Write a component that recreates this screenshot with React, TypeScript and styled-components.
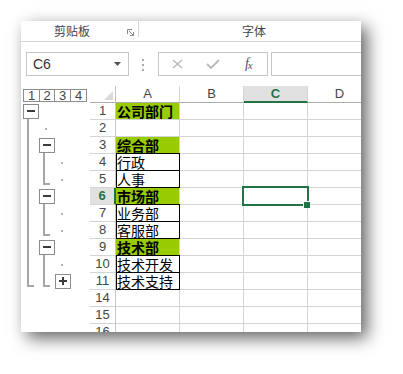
import React from 'react';
import styled, { createGlobalStyle, css } from 'styled-components';

const GlobalStyle = createGlobalStyle`
  html, body { margin: 0; padding: 0; background: #ffffff; }
  body { font-family: "Liberation Sans", "Noto Sans CJK SC", sans-serif; }
`;

const Stage = styled.div`
  width: 403px;
  height: 374px;
  padding: 21px 0 0 21px;
  box-sizing: border-box;
  background: #fff;
`;

const Window = styled.div`
  width: 340px;
  height: 311px;
  background: #fff;
  overflow: hidden;
  display: flex;
  flex-direction: column;
  box-shadow: 6px 6px 16px rgba(0, 0, 0, 0.62);
`;

/* ---------- ribbon group labels ---------- */
const GroupRow = styled.div`
  display: flex;
  height: 20px;
  flex: none;
  border-bottom: 1px solid #d5d5d5;
`;

const Group = styled.div<{ $width: number }>`
  width: ${p => p.$width}px;
  flex: none;
  display: flex;
  align-items: center;
`;

const GroupLabel = styled.span`
  flex: 1;
  text-align: center;
  font: 12px/20px "Noto Sans CJK SC", sans-serif;
  color: #444;
`;

const Launcher = styled.svg`
  flex: none;
  align-self: flex-end;
  margin: 0 4px 5px 4px;
`;

const GroupDivider = styled.div`
  width: 1px;
  height: 16px;
  background: #d5d5d5;
  flex: none;
`;

/* ---------- formula bar ---------- */
const FormulaBar = styled.div`
  display: flex;
  align-items: flex-start;
  height: 44px;
  flex: none;
  padding: 10px 0 0 5px;
  box-sizing: border-box;
`;

const NameBox = styled.div`
  width: 103px;
  height: 24px;
  flex: none;
  box-sizing: border-box;
  border: 1px solid #c6c6c6;
  display: flex;
  align-items: center;
  padding: 0 7px 0 6px;
  font: 14px "Liberation Sans", sans-serif;
  color: #333;
`;

const NameText = styled.span`
  flex: 1;
`;

const Kebab = styled.div`
  flex: none;
  margin: 7px 0 0 13px;
  display: flex;
  flex-direction: column;
  gap: 3px;
`;

const KebabDot = styled.span`
  width: 2px;
  height: 2px;
  background: #a8a8a8;
`;

const FnBox = styled.div`
  flex: none;
  margin-left: 14px;
  width: 110px;
  height: 24px;
  box-sizing: border-box;
  border: 1px solid #c6c6c6;
  display: flex;
  align-items: center;
  padding: 0 1px;
`;

const FnSlot = styled.div`
  width: 36px;
  display: flex;
  justify-content: center;
  align-items: center;
`;

const Fx = styled.span`
  font: italic 14px "Liberation Serif", serif;
  color: #555;
  letter-spacing: -1px;
  sub {
    font-size: 11px;
    vertical-align: -1px;
  }
`;

const FormulaInput = styled.div`
  flex: none;
  margin-left: 3px;
  width: 120px;
  height: 24px;
  box-sizing: border-box;
  border: 1px solid #c6c6c6;
`;

/* ---------- sheet ---------- */
const SheetArea = styled.div`
  display: flex;
  flex: none;
`;

const OutlinePane = styled.div`
  width: 69px;
  flex: none;
  display: flex;
  flex-direction: column;
`;

const LevelBar = styled.div`
  height: 17px;
  flex: none;
  display: flex;
  padding: 3px 0 0 2px;
  box-sizing: border-box;
`;

const LevelButton = styled.div<{ $w: number; $last?: boolean }>`
  width: ${p => p.$w}px;
  height: 13px;
  box-sizing: border-box;
  border: 1px solid #8c8c8c;
  border-right: ${p => (p.$last ? '1px solid #8c8c8c' : 'none')};
  display: flex;
  align-items: center;
  justify-content: center;
  font: 13px/11px "Liberation Sans", sans-serif;
  color: #444;
`;

const OutlineDrawing = styled.svg`
  display: block;
  flex: none;
`;

const Sheet = styled.div`
  flex: none;
  display: grid;
  grid-template-columns: 26px repeat(4, 64px);
  grid-auto-rows: 17px;
`;

const Corner = styled.div`
  box-sizing: border-box;
  border-right: 1px solid #c6c6c6;
  border-bottom: 1px solid #ababab;
  display: flex;
  align-items: flex-end;
  justify-content: flex-end;
  padding: 0 2px 2px 0;
`;

const ColHead = styled.div<{ $active?: boolean }>`
  box-sizing: border-box;
  border-right: 1px solid #d4d4d4;
  border-bottom: ${p => (p.$active ? '2px solid #217346' : '1px solid #ababab')};
  background: ${p => (p.$active ? '#e1e1e1' : '#fff')};
  color: ${p => (p.$active ? '#217346' : '#444')};
  font: 13px/16px "Liberation Sans", sans-serif;
  font-weight: ${p => (p.$active ? 'bold' : 'normal')};
  text-align: center;
`;

const RowHead = styled.div<{ $active?: boolean }>`
  box-sizing: border-box;
  border-right: ${p => (p.$active ? '2px solid #217346' : '1px solid #c6c6c6')};
  border-bottom: 1px solid #d4d4d4;
  background: ${p => (p.$active ? '#e1e1e1' : '#fff')};
  color: ${p => (p.$active ? '#217346' : '#444')};
  font: 13px/16px "Liberation Sans", sans-serif;
  font-weight: ${p => (p.$active ? 'bold' : 'normal')};
  text-align: center;
`;

type Kind = 'head' | 'box' | 'plain';

const Cell = styled.div<{ $kind?: Kind }>`
  position: relative;
  box-sizing: border-box;
  border-right: 1px solid #d4d4d4;
  border-bottom: 1px solid #d4d4d4;
  padding-left: 1px;
  white-space: nowrap;
  font: 14px/16px "Noto Sans CJK SC", sans-serif;
  color: #000;
  ${p =>
    p.$kind === 'head' &&
    css`
      background: #99cc00;
      font-weight: bold;
    `}
  ${p =>
    p.$kind === 'box' &&
    css`
      border-right-color: #000;
      border-bottom-color: #000;
      box-shadow: inset 1px 0 0 #000, 0 -1px 0 #000;
    `}
`;

const Selection = styled.div`
  position: absolute;
  left: -2px;
  top: -2px;
  width: 67px;
  height: 20px;
  box-sizing: border-box;
  border: 2px solid #217346;
  z-index: 1;
`;

const FillHandle = styled.div`
  position: absolute;
  left: 60px;
  top: 14px;
  width: 6px;
  height: 6px;
  background: #217346;
  box-shadow: -1px -1px 0 #fff;
`;

/* ---------- data ---------- */
const rows: { n: number; a: string; kind: Kind }[] = [
  { n: 1, a: '公司部门', kind: 'head' },
  { n: 2, a: '', kind: 'plain' },
  { n: 3, a: '综合部', kind: 'head' },
  { n: 4, a: '行政', kind: 'box' },
  { n: 5, a: '人事', kind: 'box' },
  { n: 6, a: '市场部', kind: 'head' },
  { n: 7, a: '业务部', kind: 'box' },
  { n: 8, a: '客服部', kind: 'box' },
  { n: 9, a: '技术部', kind: 'head' },
  { n: 10, a: '技术开发', kind: 'box' },
  { n: 11, a: '技术支持', kind: 'box' },
  { n: 14, a: '', kind: 'plain' },
  { n: 15, a: '', kind: 'plain' },
  { n: 16, a: '', kind: 'plain' },
];

const LINE = '#a6a6a6';
const BOX = '#8c8c8c';
const SIGN = '#3c3c3c';
const DOT = '#b4b4b4';
const T = (n: number) => (n - 1) * 17;

function OutlineButton({ x, top, plus }: { x: number; top: number; plus?: boolean }) {
  return (
    <g>
      <rect x={x + 0.5} y={top + 1.5} width={15} height={14} fill="#fff" stroke={BOX} />
      <rect x={x + 4} y={top + 7} width={8} height={2} fill={SIGN} />
      {plus && <rect x={x + 7} y={top + 4} width={2} height={8} fill={SIGN} />}
    </g>
  );
}

function Outline() {
  const groups: [number, number][] = [
    [3, 5],
    [6, 8],
    [9, 11],
  ];
  return (
    <OutlineDrawing width={69} height={238} viewBox="0 0 69 238">
      <rect x={6} y={16} width={2} height={T(11) + 14 - 16} fill={LINE} />
      <rect x={6} y={T(11) + 12} width={7} height={2} fill={LINE} />
      <OutlineButton x={2} top={T(1)} />
      <rect x={24} y={T(2) + 8} width={2} height={2} fill={DOT} />
      {groups.map(([g, last]) => (
        <g key={g}>
          <rect x={22} y={T(g) + 16} width={2} height={T(last) + 14 - (T(g) + 16)} fill={LINE} />
          <rect x={22} y={T(last) + 12} width={7} height={2} fill={LINE} />
          <OutlineButton x={18} top={T(g)} />
        </g>
      ))}
      {[4, 5, 7, 8, 10].map(n => (
        <rect key={n} x={40} y={T(n) + 8} width={2} height={2} fill={DOT} />
      ))}
      <OutlineButton x={34} top={T(11)} plus />
    </OutlineDrawing>
  );
}

export default function App() {
  return (
    <>
      <GlobalStyle />
      <Stage>
        <Window>
          <GroupRow>
            <Group $width={117}>
              <GroupLabel>剪贴板</GroupLabel>
              <Launcher width={7} height={7} viewBox="0 0 7 7">
                <path d="M0.5 5 V0.5 H5" stroke="#888" fill="none" />
                <path d="M2 2 L6 6" stroke="#888" />
                <path d="M3 6.5 H6.5 V3" stroke="#888" fill="none" />
              </Launcher>
            </Group>
            <GroupDivider />
            <Group $width={230}>
              <GroupLabel>字体</GroupLabel>
            </Group>
          </GroupRow>

          <FormulaBar>
            <NameBox>
              <NameText>C6</NameText>
              <svg width={7} height={4} viewBox="0 0 7 4">
                <polygon points="0,0 7,0 3.5,4" fill="#555" />
              </svg>
            </NameBox>
            <Kebab>
              <KebabDot />
              <KebabDot />
              <KebabDot />
            </Kebab>
            <FnBox>
              <FnSlot>
                <svg width={11} height={10} viewBox="0 0 11 10">
                  <path d="M1 1 L10 9 M10 1 L1 9" stroke="#b8b8b8" strokeWidth={1.4} fill="none" />
                </svg>
              </FnSlot>
              <FnSlot>
                <svg width={14} height={10} viewBox="0 0 14 10">
                  <path d="M1 5 L5 9 L13 1" stroke="#b8b8b8" strokeWidth={1.8} fill="none" />
                </svg>
              </FnSlot>
              <FnSlot>
                <Fx>
                  f<sub>x</sub>
                </Fx>
              </FnSlot>
            </FnBox>
            <FormulaInput />
          </FormulaBar>

          <SheetArea>
            <OutlinePane>
              <LevelBar>
                <LevelButton $w={16}>1</LevelButton>
                <LevelButton $w={15}>2</LevelButton>
                <LevelButton $w={16}>3</LevelButton>
                <LevelButton $w={17} $last>
                  4
                </LevelButton>
              </LevelBar>
              <Outline />
            </OutlinePane>

            <Sheet>
              <Corner>
                <svg width={9} height={9} viewBox="0 0 9 9">
                  <polygon points="9,0 9,9 0,9" fill="#dadada" />
                </svg>
              </Corner>
              <ColHead>A</ColHead>
              <ColHead>B</ColHead>
              <ColHead $active>C</ColHead>
              <ColHead>D</ColHead>
              {rows.map(r => (
                <React.Fragment key={r.n}>
                  <RowHead $active={r.n === 6}>{r.n}</RowHead>
                  <Cell $kind={r.kind}>{r.a}</Cell>
                  <Cell />
                  <Cell>
                    {r.n === 6 && (
                      <Selection>
                        <FillHandle />
                      </Selection>
                    )}
                  </Cell>
                  <Cell />
                </React.Fragment>
              ))}
            </Sheet>
          </SheetArea>
        </Window>
      </Stage>
    </>
  );
}
